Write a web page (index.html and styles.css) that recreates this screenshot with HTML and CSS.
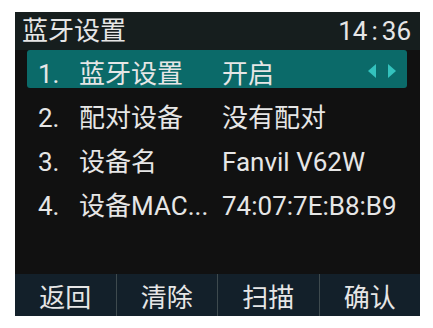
FILE: index.html
```html
<!DOCTYPE html>
<html lang="zh">
<head>
<meta charset="utf-8">
<link rel="stylesheet" href="styles.css">
</head>
<body>
<div class="screen">
  <div class="header">
    <span class="title">蓝牙设置</span>
    <span class="time">14<span class="colon">:</span>36</span>
  </div>
  <div class="list">
    <div class="row active">
      <span class="num">1.</span>
      <span class="label">蓝牙设置</span>
      <span class="value">开启</span>
      <svg class="arrows" width="30" height="14" viewBox="0 0 30 14">
        <polygon points="8,0 8,14 0,7" fill="#34c2bd"/>
        <polygon points="20,0 20,14 28,7" fill="#34c2bd"/>
      </svg>
    </div>
    <div class="row">
      <span class="num">2.</span>
      <span class="label">配对设备</span>
      <span class="value">没有配对</span>
    </div>
    <div class="row">
      <span class="num">3.</span>
      <span class="label">设备名</span>
      <span class="value">Fanvil V62W</span>
    </div>
    <div class="row">
      <span class="num">4.</span>
      <span class="label">设备MAC...</span>
      <span class="value">74:07:7E:B8:B9</span>
    </div>
  </div>
  <div class="footer">
    <div class="key">返回</div>
    <div class="key">清除</div>
    <div class="key">扫描</div>
    <div class="key">确认</div>
  </div>
</div>
</body>
</html>
```
FILE: styles.css
```css
html, body {
  margin: 0;
  padding: 0;
  background: #ffffff;
}
.screen {
  margin: 12px 0 0 15px;
  width: 405px;
  height: 304px;
  background: #111111;
  display: flex;
  flex-direction: column;
  font-family: Roboto, "Noto Sans CJK SC", sans-serif;
  font-size: 26px;
  color: #e6e6e6;
}
.header {
  height: 38px;
  flex: none;
  background: #161e1e;
  display: flex;
  justify-content: space-between;
  align-items: center;
  padding: 0 9px 0 7px;
}
.title, .time {
  line-height: 38px;
}
.colon {
  padding: 0 4px;
}
.list {
  flex: 1;
  padding: 0 13px 0 12px;
}
.row {
  height: 38px;
  margin-bottom: 6px;
  display: flex;
  align-items: flex-start;
  padding-top: 10px;
  box-sizing: border-box;
  line-height: 28px;
  position: relative;
  white-space: nowrap;
}
.row.active {
  background: #0b6a69;
  border-radius: 3px;
}
.num {
  width: 41px;
  padding-left: 11px;
  flex: none;
}
.label {
  width: 143px;
  flex: none;
}
.value {
  flex: 1;
}
.arrows {
  margin: 4px 9px 0 0;
  flex: none;
}
.footer {
  height: 42px;
  flex: none;
  background: #13202a;
  display: flex;
}
.key {
  flex: 1;
  display: flex;
  align-items: center;
  justify-content: center;
  padding-top: 1px;
}
.key + .key {
  border-left: 1px solid #3e4a4e;
}
```
